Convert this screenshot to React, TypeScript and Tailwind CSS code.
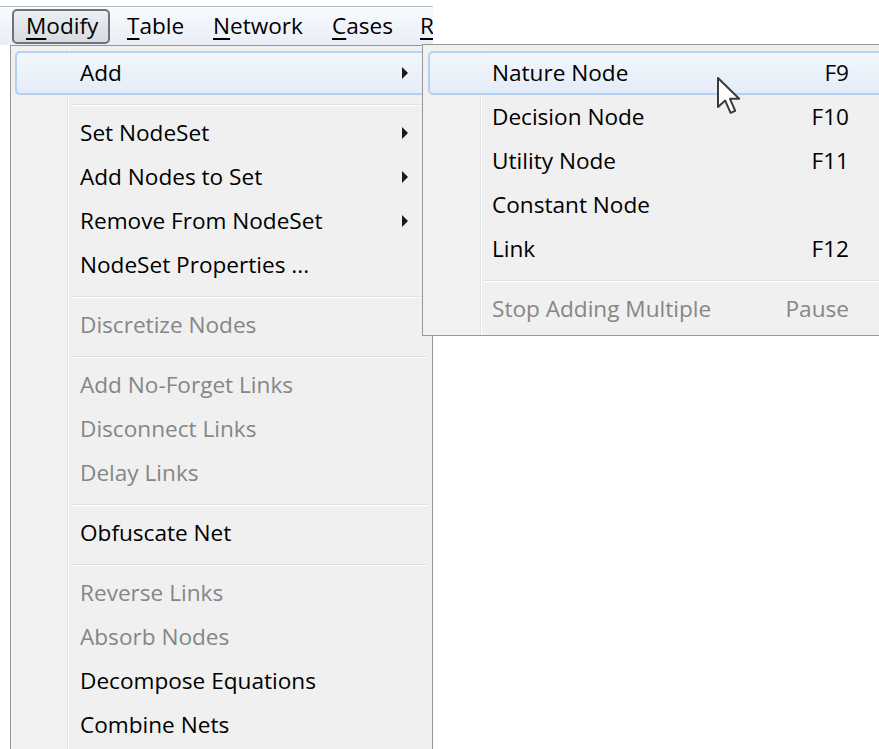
type Row =
  | { kind: "sep" }
  | { kind: "item"; label: string; off?: boolean; sub?: boolean; hot?: boolean; keys?: string };

const MAIN: Row[] = [
  { kind: "item", label: "Add", sub: true, hot: true },
  { kind: "sep" },
  { kind: "item", label: "Set NodeSet", sub: true },
  { kind: "item", label: "Add Nodes to Set", sub: true },
  { kind: "item", label: "Remove From NodeSet", sub: true },
  { kind: "item", label: "NodeSet Properties ..." },
  { kind: "sep" },
  { kind: "item", label: "Discretize Nodes", off: true },
  { kind: "sep" },
  { kind: "item", label: "Add No-Forget Links", off: true },
  { kind: "item", label: "Disconnect Links", off: true },
  { kind: "item", label: "Delay Links", off: true },
  { kind: "sep" },
  { kind: "item", label: "Obfuscate Net" },
  { kind: "sep" },
  { kind: "item", label: "Reverse Links", off: true },
  { kind: "item", label: "Absorb Nodes", off: true },
  { kind: "item", label: "Decompose Equations" },
  { kind: "item", label: "Combine Nets" },
];

const ADD: Row[] = [
  { kind: "item", label: "Nature Node", keys: "F9", hot: true },
  { kind: "item", label: "Decision Node", keys: "F10" },
  { kind: "item", label: "Utility Node", keys: "F11" },
  { kind: "item", label: "Constant Node" },
  { kind: "item", label: "Link", keys: "F12" },
  { kind: "sep" },
  { kind: "item", label: "Stop Adding Multiple", keys: "Pause", off: true },
];

// the bar is cut off right after the last mnemonic
const BAR = [
  { key: "M", rest: "odify", w: "w-[98px]" },
  { key: "T", rest: "able", w: "w-[81px]" },
  { key: "N", rest: "etwork", w: "w-[114px]" },
  { key: "C", rest: "ases", w: "w-[83px]" },
  { key: "R", rest: "", w: "w-[25px]" },
];

function Arrow() {
  return (
    <svg width="8" height="14" viewBox="0 0 8 14" className="shrink-0">
      <path d="M1 1 L7 7 L1 13 Z" fill="#1a1a1a" />
    </svg>
  );
}

function MenuRows({ rows, sepIndent, rowX }: { rows: Row[]; sepIndent: string; rowX: string }) {
  return (
    <>
      {rows.map((r, i) =>
        r.kind === "sep" ? (
          <div key={i} className={`h-[16px] pt-[9px] mr-[4px] ${sepIndent}`}>
            <div className="border-t border-b border-t-[#e0e0e0] border-b-white" />
          </div>
        ) : (
          <div
            key={i}
            className={`${rowX} h-[44px] flex items-center rounded-[5px] border-2 ${
              r.hot
                ? "border-[#b3d1f3] bg-[linear-gradient(#f3f7fc,#e4ecf8)]"
                : "border-transparent"
            } ${r.off ? "text-[#868686]" : "text-black"}`}
          >
            <span className="flex-1 whitespace-nowrap">{r.label}</span>
            {r.keys && <span className="whitespace-nowrap">{r.keys}</span>}
            {r.sub && <Arrow />}
          </div>
        )
      )}
    </>
  );
}

export default function App() {
  return (
    <div className="relative w-[879px] h-[749px] overflow-hidden bg-white font-['Open_Sans',sans-serif] text-[22.6px] leading-none">
      <div className="h-[6px]" />

      {/* menu bar */}
      <div className="w-[433px] h-[39px] overflow-hidden border-t border-[#b4bcc7] bg-[linear-gradient(#f8fafd,#e9eef6)] flex items-start pt-[2px] pl-[12px] gap-[5px]">
        {BAR.map((b, i) => (
          <div
            key={b.key}
            className={`${b.w} shrink-0 h-[35px] pl-[12px] flex items-center whitespace-nowrap ${
              i === 0
                ? "rounded-[5px] border-2 border-[#6f7378] bg-[linear-gradient(#eceff3,#d6dbe2)] pl-[10px]"
                : ""
            }`}
          >
            <span className="underline decoration-2 underline-offset-[4px]">{b.key}</span>
            {b.rest}
          </div>
        ))}
      </div>

      {/* Modify menu */}
      <div className="ml-[10px] w-[423px] h-[720px] border border-[#979797] pt-[5px] bg-[linear-gradient(to_right,#f1f1f1_0,#f1f1f1_56px,#e2e3e3_56px,#e2e3e3_57px,#ffffff_57px,#ffffff_58px,#f0f0f0_58px)]">
        <MenuRows rows={MAIN} sepIndent="ml-[59px]" rowX="mx-[4px] pl-[63px] pr-[17px]" />
      </div>

      {/* Add submenu */}
      <div className="absolute left-[422px] top-[44px] w-[484px] border border-[#979797] pt-[6px] pb-[4px] bg-[linear-gradient(to_right,#f1f1f1_0,#f1f1f1_57px,#e2e3e3_57px,#e2e3e3_58px,#ffffff_58px,#ffffff_59px,#f0f0f0_59px)]">
        <MenuRows rows={ADD} sepIndent="ml-[60px]" rowX="mx-[5px] pl-[62px] pr-[49px]" />
      </div>

      {/* mouse pointer */}
      <svg
        className="absolute left-[716px] top-[76px]"
        width="28"
        height="40"
        viewBox="0 0 14 20"
      >
        <path
          d="M1 1 L1 15.5 L4.6 12.3 L7.3 18.4 L9.6 17.4 L7 11.4 L11.6 11.4 Z"
          fill="#ffffff"
          stroke="#3a3a3a"
          strokeWidth="1"
          strokeLinejoin="round"
        />
      </svg>
    </div>
  );
}
